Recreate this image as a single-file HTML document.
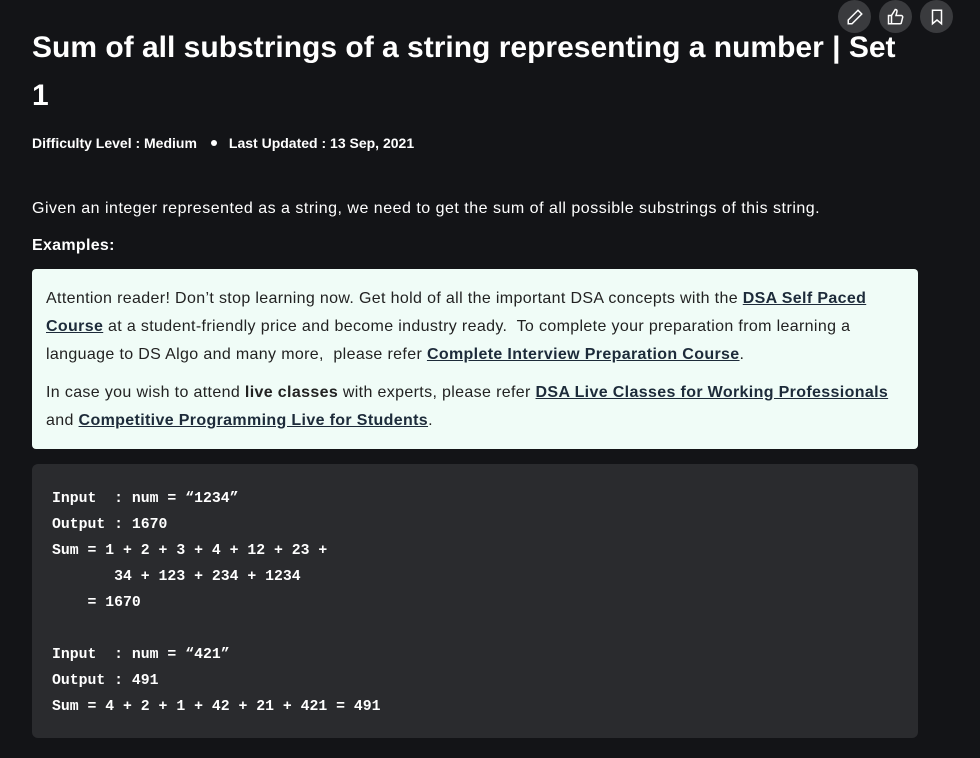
<!DOCTYPE html>
<html><head><meta charset="utf-8"><style>
body{margin:0;background:#131417;width:980px;height:758px;overflow:hidden;font-family:"Liberation Sans",sans-serif;color:#fff}
.icons{position:absolute;top:0;right:27px;display:flex;gap:8px}
.ic{width:33px;height:33px;border-radius:50%;background:#3a3b3e;display:flex;align-items:center;justify-content:center}
h1{position:absolute;left:32px;top:24px;margin:0;width:940px;font-size:30px;line-height:48px;font-weight:bold;letter-spacing:0px}
.meta{position:absolute;left:32px;top:135px;font-size:14px;font-weight:bold;letter-spacing:0px}
.meta span{display:inline-block;width:6px;height:6px;border-radius:50%;background:#fff;margin:0 12px 2px 14px}
.p{position:absolute;left:32px;top:200px;font-size:16px;letter-spacing:0.5px;white-space:nowrap}
.ex{position:absolute;left:32px;top:237px;font-size:16px;font-weight:bold;letter-spacing:0.3px}
.box{position:absolute;left:32px;top:269px;width:858px;height:150px;padding:16px 14px 14px;background:#f0fcf7;border-radius:4px;color:#222;font-size:16px;line-height:28px;letter-spacing:0.35px;white-space:nowrap}
.box p{margin:0}
.box p+p{margin-top:10px}
.box a{color:#1d2b3a;font-weight:bold;text-decoration:underline}
pre{position:absolute;left:32px;top:464px;width:866px;height:252px;margin:0;padding:22px 0 0 20px;background:#2a2b2e;border-radius:6px;font-family:"Liberation Mono",monospace;font-size:14.8px;line-height:26px;color:#fff;font-weight:bold}
</style></head><body>
<div class="icons">
<div class="ic"><svg width="18" height="18" viewBox="0 0 24 24" fill="none" stroke="#fff" stroke-width="2"><path d="M16 3l5 5L8 21H3v-5z"/></svg></div>
<div class="ic"><svg width="18" height="18" viewBox="0 0 24 24" fill="none" stroke="#fff" stroke-width="2"><rect x="2" y="10" width="4" height="11"/><path d="M6 10l5-8c2 0 3 1 2 4l-1 4h7c1 0 2 1 2 2l-2 8c0 1-1 1-2 1H6"/></svg></div>
<div class="ic"><svg width="18" height="18" viewBox="0 0 24 24" fill="none" stroke="#fff" stroke-width="2"><path d="M6 3h12v18l-6-5-6 5z"/></svg></div>
</div>
<h1>Sum of all substrings of a string representing a number | Set<br>1</h1>
<div class="meta">Difficulty Level : Medium<span></span>Last Updated : 13 Sep, 2021</div>
<div class="p">Given an integer represented as a string, we need to get the sum of all possible substrings of this string.</div>
<div class="ex">Examples:</div>
<div class="box"><p>Attention reader! Don’t stop learning now. Get hold of all the important DSA concepts with the <a>DSA Self Paced</a><br><a>Course</a> at a student-friendly price and become industry ready.&nbsp; To complete your preparation from learning a<br>language to DS Algo and many more,&nbsp; please refer <a>Complete Interview Preparation Course</a>.</p><p>In case you wish to attend <b>live classes</b> with experts, please refer <a>DSA Live Classes for Working Professionals</a><br>and <a>Competitive Programming Live for Students</a>.</p></div>
<pre>Input  : num = “1234”
Output : 1670
Sum = 1 + 2 + 3 + 4 + 12 + 23 +
       34 + 123 + 234 + 1234
    = 1670

Input  : num = “421”
Output : 491
Sum = 4 + 2 + 1 + 42 + 21 + 421 = 491</pre>
</body></html>
